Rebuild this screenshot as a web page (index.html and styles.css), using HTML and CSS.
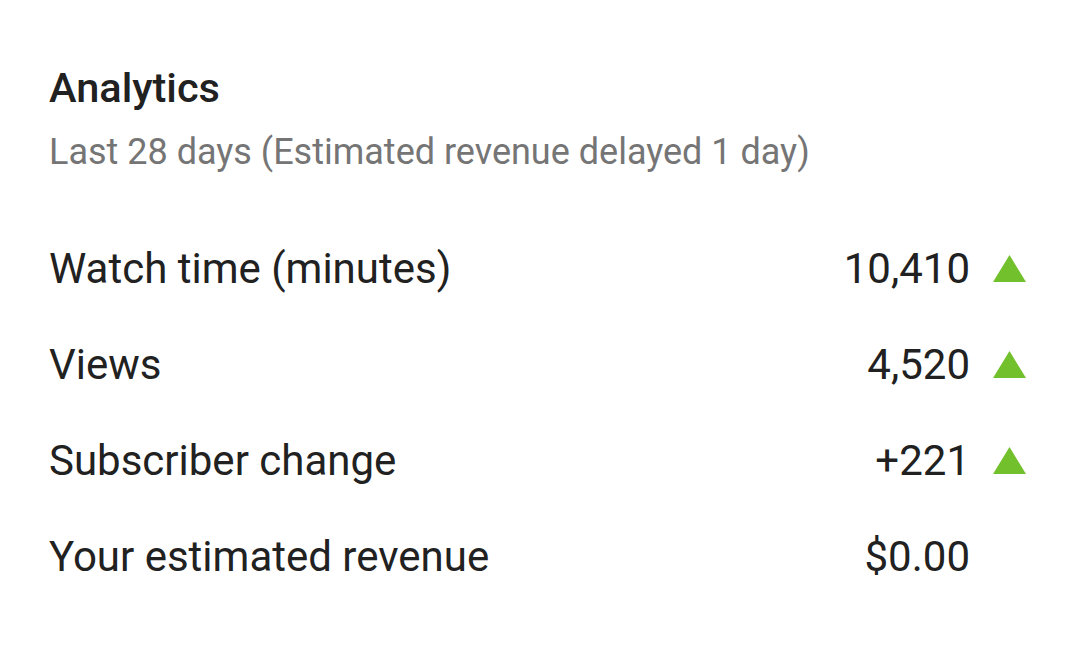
FILE: index.html
```html
<!DOCTYPE html>
<html>
<head>
<meta charset="utf-8">
<link rel="stylesheet" href="styles.css">
</head>
<body>
<div class="card">
  <h1 class="title">Analytics</h1>
  <div class="subtitle">Last 28 days (Estimated revenue delayed 1 day)</div>
  <div class="rows">
    <div class="row">
      <span class="label">Watch time (minutes)</span>
      <span class="value">10,410</span>
      <span class="trend"><svg viewBox="0 0 33 27" width="33" height="27"><polygon points="16.5,0 33,27 0,27" fill="#72c02c"/></svg></span>
    </div>
    <div class="row">
      <span class="label">Views</span>
      <span class="value">4,520</span>
      <span class="trend"><svg viewBox="0 0 33 27" width="33" height="27"><polygon points="16.5,0 33,27 0,27" fill="#72c02c"/></svg></span>
    </div>
    <div class="row">
      <span class="label">Subscriber change</span>
      <span class="value">+221</span>
      <span class="trend"><svg viewBox="0 0 33 27" width="33" height="27"><polygon points="16.5,0 33,27 0,27" fill="#72c02c"/></svg></span>
    </div>
    <div class="row">
      <span class="label">Your estimated revenue</span>
      <span class="value">$0.00</span>
      <span class="trend"></span>
    </div>
  </div>
</div>
</body>
</html>
```
FILE: styles.css
```css
html, body {
  margin: 0;
  padding: 0;
  background: #ffffff;
}
body {
  font-family: Roboto, "Noto Sans", sans-serif;
  color: #212121;
}
.card {
  padding: 64px 53px 0 49px;
}
.title {
  margin: 0;
  font-size: 41.5px;
  font-weight: 500;
  line-height: 48px;
  color: #212121;
}
.subtitle {
  margin-top: 19px;
  font-size: 36px;
  line-height: 42px;
  color: #757575;
}
.rows {
  margin-top: 71px;
  display: flex;
  flex-direction: column;
  gap: 48px;
}
.row {
  display: flex;
  align-items: center;
  height: 48px;
  font-size: 42px;
}
.label {
  flex: 1;
}
.value {
  text-align: right;
}
.trend {
  width: 33px;
  margin-left: 23px;
  display: flex;
  align-items: center;
}
```
